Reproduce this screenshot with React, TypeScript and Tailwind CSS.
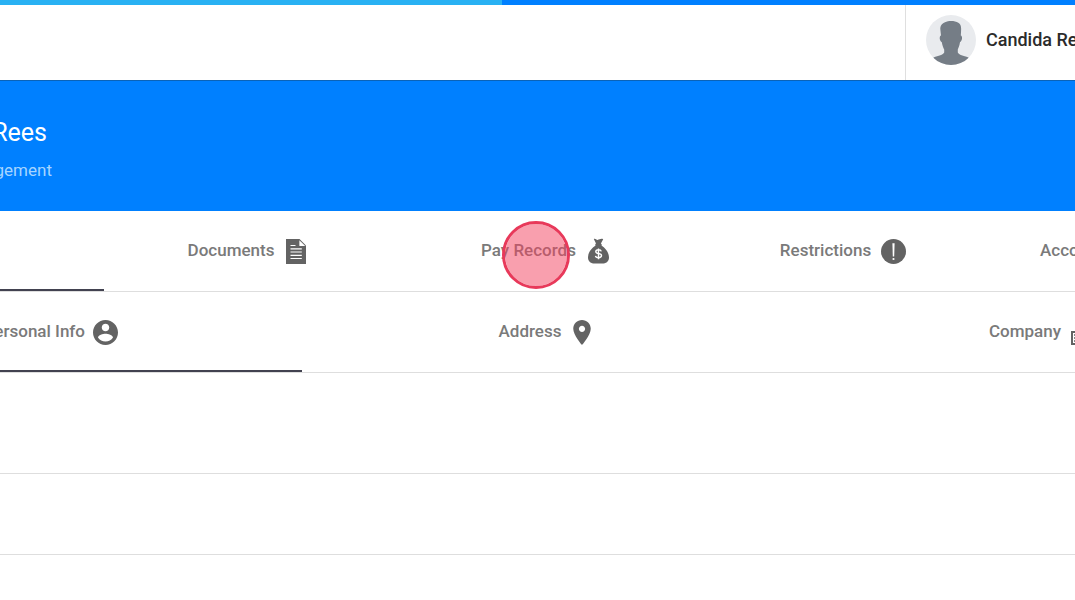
import type { ReactNode } from "react";

const iconClass = "block shrink-0 text-[#636363]";

function DocumentIcon() {
  return (
    <svg className={`${iconClass} h-[25px] w-5`} viewBox="0 0 20 25" aria-hidden="true">
      <path fill="currentColor" d="M0 0H13.5L20 6.5V25H0Z" />
      <path fill="#fff" d="M13.4 1.2V7H19.2Z" />
      <path stroke="#fff" strokeWidth="1.2" d="M4.5 6.5H9.5M4.5 9.8H15.8M4.5 13H15.8M4.5 16.3H15.8M4.5 19.5H15.8" />
    </svg>
  );
}

function MoneyBagIcon() {
  return (
    <svg className={`${iconClass} h-[26px] w-[21px]`} viewBox="0 0 21 26" aria-hidden="true">
      <path
        fill="currentColor"
        d="M5.8 1C7.4 .2 8.2 2 9.6 1.9C11.3 1.7 13 .2 15.2 1.2L12.9 5.5C14 6.2 13.9 7 13.5 7.6C17.5 10 21 15 21 19.6C21 24 17.6 25.6 14.5 25.6H6.5C3.4 25.6 0 24 0 19.6C0 15 3.5 10 7.6 7.6C7.1 7 7.1 6.2 8 5.5Z"
      />
      <path
        fill="none"
        stroke="#fff"
        strokeWidth="1.4"
        d="M10.5 10.4V21.3M13.3 13.4C13 12.2 12 11.8 10.5 11.8C8.8 11.8 7.8 12.5 7.8 13.7C7.8 16.4 13.5 14.7 13.5 17.6C13.5 19 12.3 19.7 10.5 19.7C8.8 19.7 7.7 19.1 7.5 17.8"
      />
    </svg>
  );
}

function AlertIcon() {
  return (
    <svg className={`${iconClass} size-[25px]`} viewBox="0 0 25 25" aria-hidden="true">
      <circle cx="12.5" cy="12.5" r="12.5" fill="currentColor" />
      <path fill="#fff" d="M11.4 4.3H13.6L13.2 17.5H11.8Z" />
      <circle cx="12.5" cy="20" r="1.1" fill="#fff" />
    </svg>
  );
}

function PersonIcon() {
  return (
    <svg className={`${iconClass} size-[25px]`} viewBox="2 2 20 20" aria-hidden="true">
      <path
        fill="currentColor"
        d="M12 2C6.48 2 2 6.48 2 12s4.48 10 10 10 10-4.48 10-10S17.52 2 12 2zm0 3c1.66 0 3 1.34 3 3s-1.34 3-3 3-3-1.34-3-3 1.34-3 3-3zm0 14.2c-2.5 0-4.71-1.28-6-3.22.03-1.99 4-3.08 6-3.08 1.99 0 5.97 1.09 6 3.08-1.29 1.94-3.5 3.22-6 3.22z"
      />
    </svg>
  );
}

function PinIcon() {
  return (
    <svg className={`${iconClass} h-[25px] w-[18px]`} viewBox="5 2 14 20" aria-hidden="true">
      <path
        fill="currentColor"
        d="M12 2C8.13 2 5 5.13 5 9c0 5.25 7 13 7 13s7-7.75 7-13c0-3.87-3.13-7-7-7zm0 9.5c-1.38 0-2.5-1.12-2.5-2.5s1.12-2.5 2.5-2.5 2.5 1.12 2.5 2.5-1.12 2.5-2.5 2.5z"
      />
    </svg>
  );
}

function BuildingIcon() {
  return (
    <svg className={`${iconClass} h-[26px] w-[22px]`} viewBox="0 0 22 26" aria-hidden="true">
      <path fill="none" stroke="currentColor" strokeWidth="2" d="M9 13H1V25H21V1H9V25" />
      <path stroke="currentColor" strokeWidth="1.4" d="M3 16H7M3 19H7M3 22H7M12 5H18M12 9H18M12 13H18M12 17H18" />
    </svg>
  );
}

function Avatar() {
  return (
    <svg className="size-[50px] shrink-0 rounded-full" viewBox="0 0 50 50" aria-hidden="true">
      <rect width="50" height="50" fill="#e9ebee" />
      <path
        fill="#757d86"
        d="M14.4 15C13.8 10 16.5 8.3 19 7.2C23 5.4 29 5.7 32.3 7.7C35.5 9.6 35.3 13 35 17.5L34.8 20.5C36.6 20.8 36.6 25.8 34 27.2C33.5 30.7 32.3 33 31.8 34.5V37.5C32.8 40 37.3 40.5 42.5 42.5V50H7.5V42.5C12.5 40.5 17.2 40 18.2 37.5V34.5C17.4 33 16.3 30.6 15.8 27.2C13.2 25.8 13.2 20.8 15 20.5Z"
      />
    </svg>
  );
}

type TabProps = {
  label: string;
  icon?: ReactNode;
  align?: string;
  selected?: boolean;
};

function Tab({ label, icon, align = "justify-center gap-3", selected = false }: TabProps) {
  return (
    <button
      type="button"
      role="tab"
      aria-selected={selected}
      className={`flex h-full min-w-0 cursor-pointer items-center whitespace-nowrap ${align}`}
    >
      <span>{label}</span>
      {icon}
    </button>
  );
}

export default function App() {
  return (
    <div className="relative min-h-screen overflow-hidden bg-white font-['Roboto',sans-serif] text-[17px] font-medium text-[#7a7a7a]">
      <div className="flex h-[5px] bg-[#0080ff]">
        <div className="w-[46.7%] bg-[#29b1f3]" />
      </div>

      <header className="flex h-[75px] justify-end">
        <div className="flex w-[170px] items-center gap-2.5 overflow-hidden border-l border-[#dfdfdf] pb-[5px] pl-5 text-lg font-medium whitespace-nowrap text-[#2b2b2b]">
          <Avatar />
          <span>Candida Rees</span>
        </div>
      </header>

      <section className="flex h-[131px] flex-col gap-2 border-t border-[#0a63b8] bg-[#0080ff] pt-9 whitespace-nowrap">
        <div className="flex w-[47px] justify-end">
          <h1 className="text-[25px] leading-8 font-normal text-white">Candida Rees</h1>
        </div>
        <div className="flex w-[52px] justify-end">
          <p className="leading-[26px] font-normal text-[#a6d5ff]">Management</p>
        </div>
      </section>

      <nav
        role="tablist"
        aria-label="Sections"
        className="relative grid h-[81px] grid-cols-[98fr_298fr_298fr_298fr_83fr] items-center border-b border-[#dedede]"
      >
        <Tab label="" selected />
        <Tab label="Documents" icon={<DocumentIcon />} />
        <Tab label="Pay Records" icon={<MoneyBagIcon />} />
        <Tab label="Restrictions" icon={<AlertIcon />} align="justify-center gap-2.5" />
        <Tab label="Account" align="justify-start pl-12" />
        <span className="absolute bottom-0 left-0 h-0.5 w-[9.7%] bg-[#424250]" />
      </nav>

      <nav
        role="tablist"
        aria-label="Details"
        className="relative grid h-[81px] grid-cols-[302fr_486fr_287fr] items-center border-b border-[#dedede]"
      >
        <div className="flex h-full w-[118px] justify-end">
          <Tab label="Personal Info" icon={<PersonIcon />} align="shrink-0 gap-2" selected />
        </div>
        <Tab label="Address" icon={<PinIcon />} />
        <Tab label="Company" icon={<BuildingIcon />} align="justify-start gap-2.5 pl-[201px]" />
        <span className="absolute bottom-0 left-0 h-0.5 w-[28.1%] bg-[#424250]" />
      </nav>

      <main>
        <div className="h-[101px] border-b border-[#dedede]" />
        <div className="h-[81px] border-b border-[#dedede]" />
      </main>

      <span className="pointer-events-none absolute top-[221px] left-[502px] size-[68px] rounded-full border-3 border-[#e8395a] bg-[#f43f5e]/50 bg-clip-padding" />
    </div>
  );
}
